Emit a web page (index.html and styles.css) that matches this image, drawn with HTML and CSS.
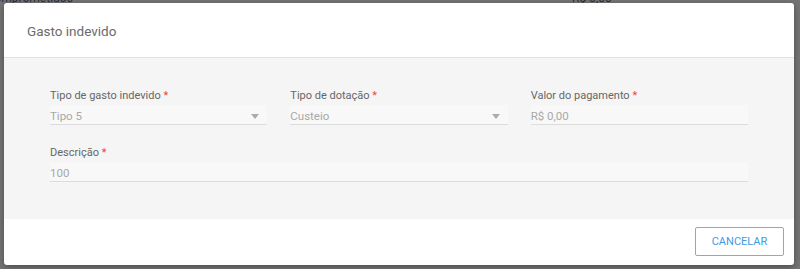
FILE: index.html
```html
<!DOCTYPE html>
<html lang="pt-BR">
<head>
    <meta charset="UTF-8">
    <meta name="viewport" content="width=device-width, initial-scale=1.0">
    <title>Gasto indevido</title>
    <link rel="stylesheet" href="styles.css">
</head>
<body>
    <div class="backdrop">
        <span class="bg-text bg-left">Valores comprometidos</span>
        <span class="bg-text bg-right">R$ 0,00</span>
    </div>

    <div class="dialog">
        <div class="dialog-header">Gasto indevido</div>

        <div class="dialog-body">
            <div class="row three">
                <div class="field">
                    <label>Tipo de gasto indevido <span class="req">*</span></label>
                    <div class="input select">
                        <span>Tipo 5</span>
                        <span class="arrow"></span>
                    </div>
                </div>
                <div class="field">
                    <label>Tipo de dotação <span class="req">*</span></label>
                    <div class="input select">
                        <span>Custeio</span>
                        <span class="arrow"></span>
                    </div>
                </div>
                <div class="field">
                    <label>Valor do pagamento <span class="req">*</span></label>
                    <div class="input">
                        <span>R$ 0,00</span>
                    </div>
                </div>
            </div>

            <div class="row">
                <div class="field">
                    <label>Descrição <span class="req">*</span></label>
                    <div class="input">
                        <span>100</span>
                    </div>
                </div>
            </div>
        </div>

        <div class="dialog-footer">
            <button class="btn-outline">CANCELAR</button>
        </div>
    </div>
</body>
</html>
```

FILE: styles.css
```css
html, body { margin: 0; padding: 0; }
body { font-family: Roboto, "Liberation Sans", Arial, sans-serif; background: #747474; width: 800px; height: 269px; overflow: hidden; position: relative; }

.backdrop { height: 3px; overflow: hidden; position: relative; }
.bg-text { position: absolute; top: -9px; font-size: 12px; color: #2a2a3a; }
.bg-left { left: -55px; }
.bg-right { left: 572px; }

.dialog { margin: 0 6px 0 4px; height: 262px; background: #fff; border-radius: 3px; box-shadow: 0 2px 6px rgba(0,0,0,0.35); display: flex; flex-direction: column; overflow: hidden; }

.dialog-header { height: 55px; line-height: 56px; padding-left: 23px; font-size: 13.5px; color: #6b6b6b; border-bottom: 1px solid #e2e2e2; box-sizing: border-box; flex: none; }

.dialog-body { background: #f5f5f5; padding: 30px 46px 37px 46px; display: flex; flex-direction: column; gap: 20px; flex: none; height: 161px; box-sizing: border-box; }

.row { display: grid; grid-template-columns: 1fr; }
.row.three { grid-template-columns: 1fr 1fr 1fr; column-gap: 23px; }

.field label { display: block; font-size: 11px; line-height: 16px; color: #666; margin-bottom: 1px; }
.req { color: #f44336; }

.input { height: 16px; padding-top: 3px; border-bottom: 1px solid #dcdcdc; background: #f8f8f8; font-size: 11.5px; line-height: 16px; color: #a8a8a8; display: flex; align-items: center; justify-content: space-between; }
.arrow { width: 0; height: 0; border-left: 4px solid transparent; border-right: 4px solid transparent; border-top: 5px solid #ababab; margin-right: 8px; }

.dialog-footer { flex: 1; display: flex; justify-content: flex-end; align-items: flex-start; padding: 8px 10px 0 0; }

.btn-outline { width: 89px; height: 29px; background: #fff; border: 1px solid #64b5f6; border-radius: 2px; color: #3d9ae6; font-family: Roboto, "Liberation Sans", Arial, sans-serif; font-size: 11px; cursor: pointer; padding: 0; }
```
